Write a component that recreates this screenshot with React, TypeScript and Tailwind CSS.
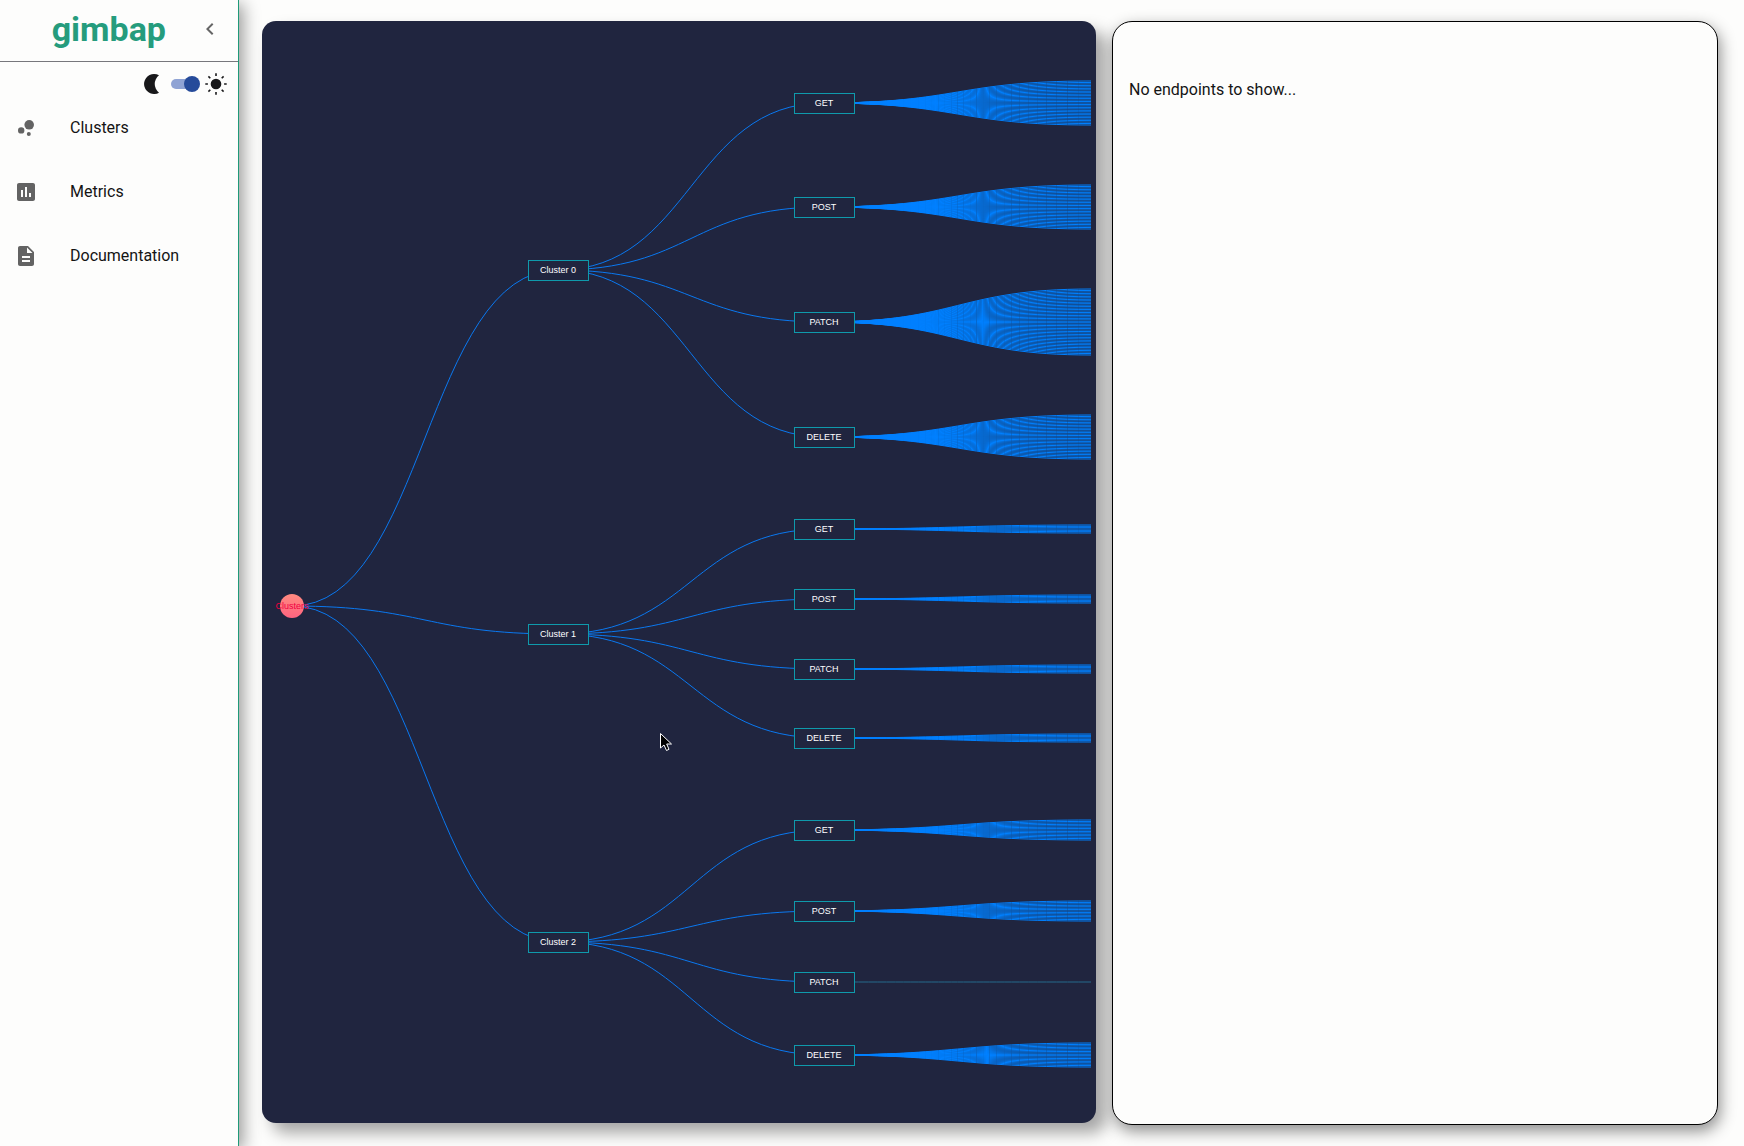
import React, { useState } from "react";
import {
  MdAssessment,
  MdBubbleChart,
  MdChevronLeft,
  MdDescription,
} from "react-icons/md";

type Method = {
  name: string;
  y: number;
  top: number;
  bottom: number;
  endpoints: number;
};
type Cluster = { name: string; y: number; methods: Method[] };

/* Tree columns, in drawing units */
const ROOT = { x: 30, y: 585 };
const CLUSTER_X = 296;
const METHOD_X = 562;
const LEAF_X = 829;

const clusters: Cluster[] = [
  {
    name: "Cluster 0",
    y: 249,
    methods: [
      { name: "GET", y: 82, top: 60, bottom: 104, endpoints: 31 },
      { name: "POST", y: 186, top: 164, bottom: 208, endpoints: 31 },
      { name: "PATCH", y: 301, top: 268, bottom: 334, endpoints: 46 },
      { name: "DELETE", y: 416, top: 394, bottom: 438, endpoints: 31 },
    ],
  },
  {
    name: "Cluster 1",
    y: 613,
    methods: [
      { name: "GET", y: 508, top: 504, bottom: 512, endpoints: 7 },
      { name: "POST", y: 578, top: 574, bottom: 582, endpoints: 7 },
      { name: "PATCH", y: 648, top: 644, bottom: 652, endpoints: 7 },
      { name: "DELETE", y: 717, top: 713, bottom: 721, endpoints: 7 },
    ],
  },
  {
    name: "Cluster 2",
    y: 921,
    methods: [
      { name: "GET", y: 809, top: 799, bottom: 819, endpoints: 15 },
      { name: "POST", y: 890, top: 880, bottom: 900, endpoints: 15 },
      { name: "PATCH", y: 961, top: 961, bottom: 961, endpoints: 1 },
      { name: "DELETE", y: 1034, top: 1022, bottom: 1046, endpoints: 18 },
    ],
  },
];

function link(x0: number, y0: number, x1: number, y1: number) {
  const mid = (x0 + x1) / 2;
  return `M${x0},${y0}C${mid},${y0} ${mid},${y1} ${x1},${y1}`;
}

function leaves(m: Method) {
  const step = m.endpoints > 1 ? (m.bottom - m.top) / (m.endpoints - 1) : 0;
  return Array.from({ length: m.endpoints }, (_, i) => m.top + i * step);
}

function Box({ x, y, label }: { x: number; y: number; label: string }) {
  return (
    <g>
      <rect
        x={x - 30}
        y={y - 10}
        width={60}
        height={20}
        shapeRendering="crispEdges"
        className="fill-[#20253f] stroke-[#0f9aac]"
      />
      <text
        x={x}
        y={y + 3}
        textAnchor="middle"
        className="fill-white font-['Liberation_Sans',Arial,sans-serif] text-[9px]"
      >
        {label}
      </text>
    </g>
  );
}

function Tree() {
  return (
    <svg
      viewBox="0 0 834 1102"
      className="block w-full"
      role="img"
      aria-label="Cluster tree"
    >
      <defs>
        <linearGradient id="root-fill" x1="0" y1="0" x2="0" y2="1">
          <stop offset="0" stopColor="#ff8a80" />
          <stop offset="1" stopColor="#ff6480" />
        </linearGradient>
      </defs>
      <g className="fill-none stroke-[#0a78f0]">
        {clusters.map((c) => (
          <g key={c.name}>
            <path d={link(ROOT.x, ROOT.y, CLUSTER_X, c.y)} />
            {c.methods.map((m) => (
              <g key={m.name}>
                <path d={link(CLUSTER_X, c.y, METHOD_X, m.y)} />
                {leaves(m).map((y) => (
                  <path
                    key={y}
                    d={link(METHOD_X, m.y, LEAF_X, y)}
                    className={
                      m.endpoints === 1 ? "stroke-[#246a8c]" : "stroke-[#0080ff]"
                    }
                  />
                ))}
              </g>
            ))}
          </g>
        ))}
      </g>
      <circle cx={ROOT.x} cy={ROOT.y} r={12} fill="url(#root-fill)" />
      <text
        x={ROOT.x}
        y={ROOT.y + 3}
        textAnchor="middle"
        className="fill-[#f00040] font-['Liberation_Sans',Arial,sans-serif] text-[9px]"
      >
        Clusters
      </text>
      {clusters.map((c) => (
        <g key={c.name}>
          <Box x={CLUSTER_X} y={c.y} label={c.name} />
          {c.methods.map((m) => (
            <Box key={m.name} x={METHOD_X} y={m.y} label={m.name} />
          ))}
        </g>
      ))}
      {/* Pointer */}
      <path
        d="M398.500 712.500v14.500l3.500-3 2.500 5.500 2.500-1.200-2.300-5.300h4.800z"
        className="fill-black stroke-white stroke-1"
      />
    </svg>
  );
}

function Moon() {
  return (
    <svg viewBox="0 0 16 20" className="h-5 w-4 fill-[#18181a]" aria-hidden="true">
      <path d="M10 0a10 10 0 1 0 5 18.700a11 11 0 0 1 0-17.400A10 10 0 0 0 10 0z" />
    </svg>
  );
}

function Sun() {
  return (
    <svg viewBox="0 0 22 22" className="size-[22px]" aria-hidden="true">
      <circle cx="11" cy="11" r="5.300" className="fill-[#18181a]" />
      <g className="stroke-[#18181a] stroke-[1.600]">
        <path d="M11 .3v2.600M11 19.100v2.600M.3 11h2.600M19.100 11h2.600M3.400 3.400l1.900 1.900M16.700 16.700l1.900 1.900M3.400 18.600l1.900-1.900M16.700 5.300l1.900-1.900" />
      </g>
    </svg>
  );
}

const nav = [
  { label: "Clusters", Icon: MdBubbleChart },
  { label: "Metrics", Icon: MdAssessment },
  { label: "Documentation", Icon: MdDescription },
];

export default function App() {
  const [light, setLight] = useState(true);
  return (
    <div className="flex min-h-screen bg-[#fdfdfc] font-[Roboto,sans-serif] text-[#141414]">
      <aside className="w-[239px] shrink-0 border-r border-[#1f9a78] shadow-[4px_4px_16px_rgba(0,0,0,0.4)]">
        <header className="flex h-[62px] items-center justify-end gap-8 border-b border-[#77777c] pr-4 pb-1">
          <h1 className="text-[34px] leading-[56px] font-bold text-[#259c7d]">gimbap</h1>
          <button type="button" aria-label="Collapse sidebar" className="text-[#666]">
            <MdChevronLeft size={24} />
          </button>
        </header>
        <div className="flex h-[42px] items-center justify-end pt-[2px] pr-[11px]">
          <Moon />
          <label className="relative mr-1 ml-[11px] flex h-4 w-[30px] cursor-pointer items-center">
            <input
              type="checkbox"
              role="switch"
              aria-label="Light mode"
              checked={light}
              onChange={(e) => setLight(e.target.checked)}
              className="peer absolute inset-0 cursor-pointer opacity-0"
            />
            <span className="h-[10px] w-[26px] rounded-full bg-[#8fa3d4]" />
            <span className="pointer-events-none absolute left-0 size-4 rounded-full bg-[#264b9a] peer-checked:left-[13px]" />
          </label>
          <Sun />
        </div>
        <nav>
          <ul>
            {nav.map(({ label, Icon }) => (
              <li key={label} className="mb-4">
                <a href="#" className="flex h-12 items-center gap-8 px-[14px]">
                  <Icon size={24} className="text-[#636363]" />
                  <span className="text-base">{label}</span>
                </a>
              </li>
            ))}
          </ul>
        </nav>
      </aside>
      <main className="grid min-w-0 flex-1 grid-cols-[834fr_606fr] gap-4 py-[21px] pr-[26px] pl-[23px]">
        <section className="min-w-0 self-start overflow-hidden rounded-[14px] bg-[#20253f] shadow-[10px_10px_16px_rgba(0,0,0,0.35)]">
          <Tree />
        </section>
        <section className="min-w-0 rounded-[20px] border border-black bg-[#fdfdfc] px-4 pt-14 shadow-[2px_6px_16px_rgba(0,0,0,0.45)]">
          <p className="text-base">No endpoints to show...</p>
        </section>
      </main>
    </div>
  );
}
